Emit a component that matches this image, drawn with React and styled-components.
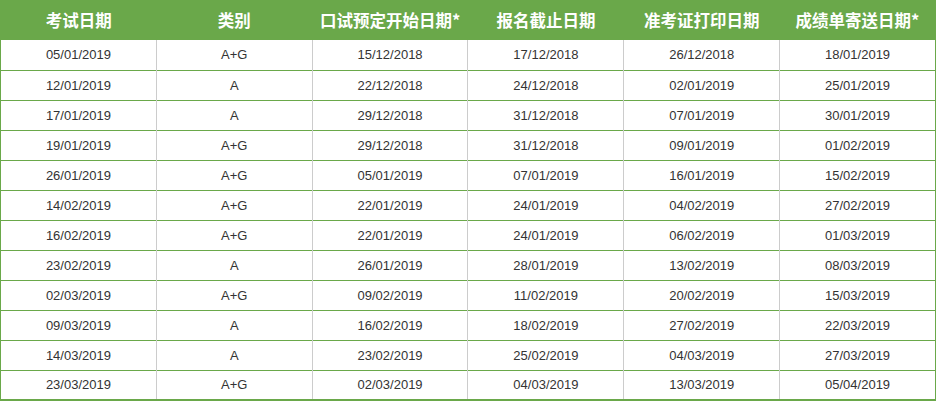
import React from "react";
import styled, { createGlobalStyle } from "styled-components";

const GlobalStyle = createGlobalStyle`
  html, body {
    margin: 0;
    padding: 0;
    background: #ffffff;
  }
`;

const Table = styled.table`
  width: 936px;
  border-collapse: collapse;
  table-layout: fixed;
  font-family: "Liberation Sans", Arial, "Noto Sans CJK SC", sans-serif;
  border-left: 1px solid #6aa84a;
  border-right: 1px solid #6aa84a;
  border-bottom: 2px solid #6aa84a;
`;

const HeaderCell = styled.th`
  height: 40px;
  padding: 0;
  background-color: #6aa84a;
  color: #ffffff;
  font-family: "Noto Sans CJK SC", "Liberation Sans", sans-serif;
  font-size: 16.5px;
  font-weight: bold;
  text-align: center;
  vertical-align: middle;
`;

const Row = styled.tr`
  height: 30px;
  border-top: ${(p) => (p.$first ? "none" : "1px solid #6aa84a")};
`;

const Cell = styled.td`
  padding: 0;
  font-size: 13px;
  color: #333333;
  text-align: center;
  vertical-align: middle;
  border-left: ${(p) => (p.$first ? "none" : "1px solid #cccccc")};
`;

const headers = [
  "考试日期",
  "类别",
  "口试预定开始日期*",
  "报名截止日期",
  "准考证打印日期",
  "成绩单寄送日期*",
];

const rows = [
  ["05/01/2019", "A+G", "15/12/2018", "17/12/2018", "26/12/2018", "18/01/2019"],
  ["12/01/2019", "A", "22/12/2018", "24/12/2018", "02/01/2019", "25/01/2019"],
  ["17/01/2019", "A", "29/12/2018", "31/12/2018", "07/01/2019", "30/01/2019"],
  ["19/01/2019", "A+G", "29/12/2018", "31/12/2018", "09/01/2019", "01/02/2019"],
  ["26/01/2019", "A+G", "05/01/2019", "07/01/2019", "16/01/2019", "15/02/2019"],
  ["14/02/2019", "A+G", "22/01/2019", "24/01/2019", "04/02/2019", "27/02/2019"],
  ["16/02/2019", "A+G", "22/01/2019", "24/01/2019", "06/02/2019", "01/03/2019"],
  ["23/02/2019", "A", "26/01/2019", "28/01/2019", "13/02/2019", "08/03/2019"],
  ["02/03/2019", "A+G", "09/02/2019", "11/02/2019", "20/02/2019", "15/03/2019"],
  ["09/03/2019", "A", "16/02/2019", "18/02/2019", "27/02/2019", "22/03/2019"],
  ["14/03/2019", "A", "23/02/2019", "25/02/2019", "04/03/2019", "27/03/2019"],
  ["23/03/2019", "A+G", "02/03/2019", "04/03/2019", "13/03/2019", "05/04/2019"],
];

const App = () => {
  return (
    <>
      <GlobalStyle />
      <Table>
        <thead>
          <tr>
            {headers.map((h) => (
              <HeaderCell key={h}>{h}</HeaderCell>
            ))}
          </tr>
        </thead>
        <tbody>
          {rows.map((row, i) => (
            <Row key={i} $first={i === 0}>
              {row.map((val, j) => (
                <Cell key={j} $first={j === 0}>
                  {val}
                </Cell>
              ))}
            </Row>
          ))}
        </tbody>
      </Table>
    </>
  );
};

export default App;
